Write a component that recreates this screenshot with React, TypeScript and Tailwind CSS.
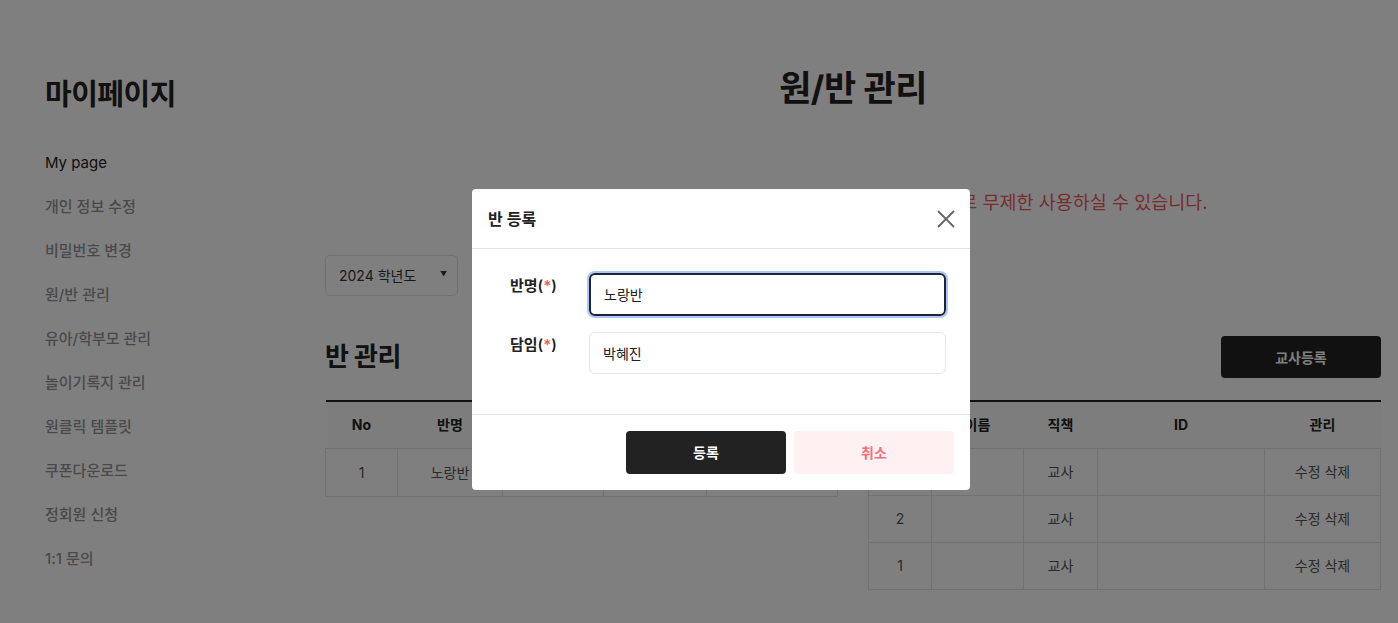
import React from "react";

const FONT = { fontFamily: 'Inter, "Noto Sans CJK KR", sans-serif' };

const menu = [
  "개인 정보 수정",
  "비밀번호 변경",
  "원/반 관리",
  "유아/학부모 관리",
  "놀이기록지 관리",
  "원클릭 템플릿",
  "쿠폰다운로드",
  "정회원 신청",
  "1:1 문의",
];

const teachers = [
  { no: 3, name: "", role: "교사", id: "" },
  { no: 2, name: "", role: "교사", id: "" },
  { no: 1, name: "", role: "교사", id: "" },
];

export default function App() {
  return (
    <div className="relative min-h-screen w-full bg-white text-[#222]" style={FONT}>
      <div className="flex pl-[45px]">
        {/* Sidebar */}
        <aside className="w-[280px] shrink-0 pt-[77px]">
          <h1 className="text-[29px] font-bold leading-[36px] tracking-[-0.5px]">마이페이지</h1>
          <ul className="mt-[39px] flex flex-col">
            <li className="h-[44px] text-[15px] leading-[22px] text-[#222]">My page</li>
            {menu.map((m) => (
              <li key={m} className="h-[44px] text-[15px] font-medium leading-[22px] text-[#939393]">
                {m}
              </li>
            ))}
          </ul>
        </aside>

        {/* Main */}
        <main className="w-[1056px] shrink-0 pt-[67px]">
          <h2 className="text-center text-[35px] font-bold leading-[42px] tracking-[-0.5px]">원/반 관리</h2>
          <p className="mt-[81px] text-center text-[18.5px] leading-[24px] text-[#ec5a64]">
            정회원으로 전환하시면 교사등록 기능을 추가 결제 없이 무료로 무제한 사용하실 수 있습니다.
          </p>
          <div className="mt-[41px] flex">
            <div className="flex h-[41px] w-[133px] items-center justify-between rounded-[5px] border border-[#e2e2e2] pl-[13px] pr-[10px] text-[14px] text-[#333]">
              <span>2024 학년도</span>
              <span className="text-[7px]">▼</span>
            </div>
          </div>

          <div className="mt-[40px] flex gap-[30px]">
            {/* Class table */}
            <section className="w-[513px]">
              <div className="flex h-[64px] items-start">
                <h3 className="mt-[6px] text-[26px] font-bold leading-[30px] tracking-[-0.5px]">반 관리</h3>
              </div>
              <table className="w-full border-collapse text-[14px]">
                <thead>
                  <tr className="h-[47px] border-t-2 border-b border-[#222] bg-[#fafafa]">
                    <th className="w-[72px] font-bold">No</th>
                    <th className="w-[105px] font-bold">반명</th>
                    <th className="w-[101px] font-bold">담임</th>
                    <th className="w-[103px] font-bold">유아수</th>
                    <th className="font-bold">관리</th>
                  </tr>
                </thead>
                <tbody className="text-[#555]">
                  <tr className="h-[48px]">
                    <td className="border border-[#e5e5e5] text-center">1</td>
                    <td className="border border-[#e5e5e5] text-center">노랑반</td>
                    <td className="border border-[#e5e5e5] text-center">박혜진</td>
                    <td className="border border-[#e5e5e5] text-center">0</td>
                    <td className="border border-[#e5e5e5] text-center">수정 삭제</td>
                  </tr>
                </tbody>
              </table>
            </section>

            {/* Teacher table */}
            <section className="w-[513px]">
              <div className="flex h-[64px] items-start justify-between">
                <h3 className="mt-[6px] text-[26px] font-bold leading-[30px] tracking-[-0.5px]">교사 관리</h3>
                <button className="h-[42px] w-[160px] rounded-[4px] bg-[#222] text-[14px] font-bold text-white">
                  교사등록
                </button>
              </div>
              <table className="w-full border-collapse text-[14px]">
                <thead>
                  <tr className="h-[47px] border-t-2 border-b border-[#222] bg-[#fafafa]">
                    <th className="w-[63px] font-bold">No</th>
                    <th className="w-[92px] font-bold">이름</th>
                    <th className="w-[74px] font-bold">직책</th>
                    <th className="w-[167px] font-bold">ID</th>
                    <th className="font-bold">관리</th>
                  </tr>
                </thead>
                <tbody className="text-[#555]">
                  {teachers.map((t) => (
                    <tr key={t.no} className="h-[47px]">
                      <td className="border border-[#e5e5e5] text-center">{t.no}</td>
                      <td className="border border-[#e5e5e5] text-center">{t.name}</td>
                      <td className="border border-[#e5e5e5] text-center">{t.role}</td>
                      <td className="border border-[#e5e5e5] text-center">{t.id}</td>
                      <td className="border border-[#e5e5e5] text-center">수정 삭제</td>
                    </tr>
                  ))}
                </tbody>
              </table>
            </section>
          </div>
        </main>
      </div>

      {/* Overlay */}
      <div className="fixed inset-0 bg-black/50" />

      {/* Modal */}
      <div className="absolute left-[472px] top-[189px] w-[498px] rounded-[4px] bg-white">
        <div className="flex h-[60px] items-center justify-between border-b border-[#e3e3e8] pl-[16px] pr-[14px]">
          <span className="text-[16px] font-semibold text-[#222]">반 등록</span>
          <svg width="20" height="20" viewBox="0 0 20 20" fill="none" stroke="#666" strokeWidth="1.8" strokeLinecap="round">
            <path d="M2.5 2.5 L17.5 17.5 M17.5 2.5 L2.5 17.5" />
          </svg>
        </div>
        <div className="flex flex-col gap-[16px] pb-[40px] pl-[38px] pr-[24px] pt-[24px]">
          <div className="flex items-start">
            <label className="w-[79px] pt-[2px] text-[15px] font-semibold text-[#222]">
              반명(<span className="text-[#f05a6a]">*</span>)
            </label>
            <div className="flex h-[43px] flex-1 items-center rounded-[6px] border-2 border-[#1e2433] pl-[13px] text-[14px] text-[#222] shadow-[0_0_0_2px_#a9c8f5]">
              노랑반
            </div>
          </div>
          <div className="flex items-start">
            <label className="w-[79px] pt-[2px] text-[15px] font-semibold text-[#222]">
              담임(<span className="text-[#f05a6a]">*</span>)
            </label>
            <div className="flex h-[42px] flex-1 items-center rounded-[6px] border border-[#e6e6ea] pl-[13px] text-[14px] text-[#222]">
              박혜진
            </div>
          </div>
        </div>
        <div className="flex justify-end gap-[8px] border-t border-[#e3e3e8] pb-[16px] pr-[16px] pt-[16px]">
          <button className="h-[43px] w-[160px] rounded-[4px] bg-[#222] text-[14px] font-bold text-white">등록</button>
          <button className="h-[43px] w-[160px] rounded-[4px] bg-[#fff0f2] text-[14px] font-bold text-[#f2707f]">취소</button>
        </div>
      </div>
    </div>
  );
}
